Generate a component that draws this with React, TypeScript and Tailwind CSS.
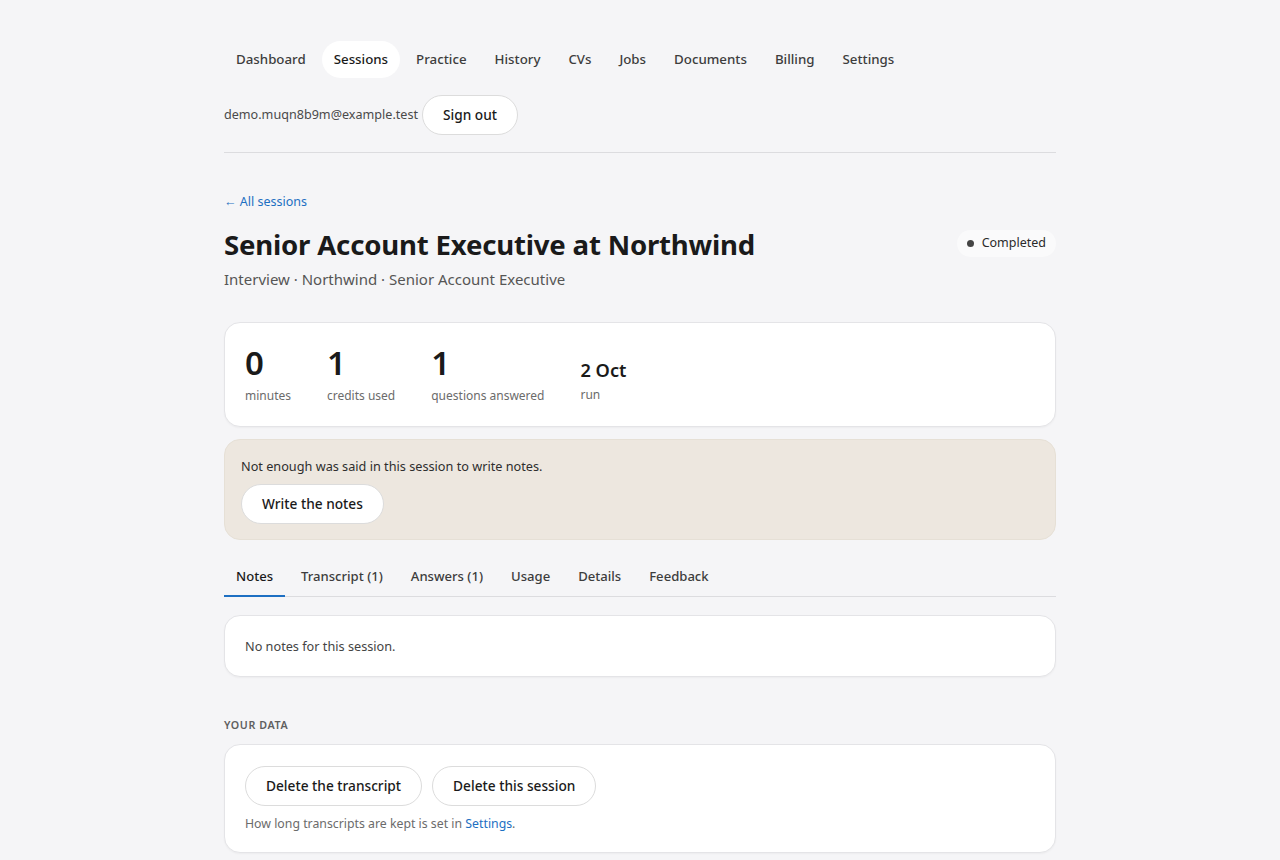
// Session detail page — nav, header, stats, notes banner, tabs, data controls

const NAV = ["Dashboard", "Sessions", "Practice", "History", "CVs", "Jobs", "Documents", "Billing", "Settings"];
const TABS = ["Notes", "Transcript (1)", "Answers (1)", "Usage", "Details", "Feedback"];

const STATS = [
  { value: "0", label: "minutes" },
  { value: "1", label: "credits used" },
  { value: "1", label: "questions answered" },
];

function PillButton({ children }: { children: React.ReactNode }) {
  return (
    <button className="h-10 px-5 rounded-full bg-white border border-[#dcdcdc] text-[13.7px] font-medium text-[#1a1a1a]">
      {children}
    </button>
  );
}

function Card({ children, className = "" }: { children: React.ReactNode; className?: string }) {
  return (
    <div className={`bg-white rounded-2xl border border-[#e4e4e7] shadow-[0_1px_2px_rgba(0,0,0,0.04)] ${className}`}>
      {children}
    </div>
  );
}

export default function App() {
  return (
    <div
      className="min-h-screen bg-[#f5f5f7] text-[#1a1a1a]"
      style={{ fontFamily: '"Segoe UI", "Noto Sans", sans-serif' }}
    >
      <div className="max-w-[832px] mx-auto pt-[41px]">
        {/* top nav */}
        <nav className="flex items-center gap-1">
          {NAV.map((item) => (
            <a
              key={item}
              className={`h-[37px] px-3 flex items-center rounded-full text-[13.3px] font-medium ${
                item === "Sessions" ? "bg-white text-[#1a1a1a]" : "text-[#3d3d3d]"
              }`}
            >
              {item}
            </a>
          ))}
        </nav>

        <div className="flex items-center gap-1 mt-[17px]">
          <span className="text-[12.6px] text-[#4a4a4a]">demo.muqn8b9m@example.test</span>
          <PillButton>Sign out</PillButton>
        </div>

        <div className="h-px bg-[#dcdcdf] mt-[17px]" />

        {/* header */}
        <a className="block mt-10 text-[12.5px] text-[#1d6fc2]">← All sessions</a>

        <div className="flex items-start justify-between mt-3">
          <h1 className="text-[27.6px] font-bold leading-[38px] tracking-[-0.2px] pt-px">
            Senior Account Executive at Northwind
          </h1>
          <span className="mt-1.5 flex items-center gap-2 px-2.5 py-1 rounded-full bg-[#fafafb] text-[12.5px] text-[#2a2a2a]">
            <span className="w-[7px] h-[7px] rounded-full bg-[#444]" />
            Completed
          </span>
        </div>
        <p className="mt-[5px] text-[15px] text-[#555]">Interview · Northwind · Senior Account Executive</p>

        {/* stats */}
        <Card className="mt-[32px] px-5 py-5 flex items-start gap-9 h-[105px]">
          {STATS.map((s) => (
            <div key={s.label} className="flex flex-col">
              <span className="text-[33px] font-semibold leading-[40px] text-[#1a1a1a]">{s.value}</span>
              <span className="text-[12px] text-[#6b6b6b] mt-1">{s.label}</span>
            </div>
          ))}
          <div className="flex flex-col pt-[15px]">
            <span className="text-[18.2px] font-semibold leading-6">2 Oct</span>
            <span className="text-[12px] text-[#6b6b6b] mt-1">run</span>
          </div>
        </Card>

        {/* notes banner */}
        <div className="mt-3 rounded-2xl bg-[#ede7df] border border-[#e6e0d6] px-4 pt-[17px] pb-[15px]">
          <p className="text-[12.7px] text-[#2e2e2e]">Not enough was said in this session to write notes.</p>
          <div className="mt-2">
            <PillButton>Write the notes</PillButton>
          </div>
        </div>

        {/* tabs */}
        <div className="mt-5 flex gap-1 border-b border-[#dcdcdf]">
          {TABS.map((t) => (
            <button
              key={t}
              className={`px-3 h-[37px] pt-[6px] flex items-start leading-5 text-[13.1px] font-medium -mb-px border-b-2 ${
                t === "Notes" ? "border-[#1d6fc2] text-[#1a1a1a]" : "border-transparent text-[#3d3d3d]"
              }`}
            >
              {t}
            </button>
          ))}
        </div>

        <Card className="mt-[18px] h-[62px] px-5 flex items-center">
          <p className="text-[12.7px] text-[#444]">No notes for this session.</p>
        </Card>

        {/* data */}
        <h2 className="mt-10 text-[10.7px] font-semibold tracking-[0.6px] uppercase text-[#5f5f5f]">Your data</h2>
        <Card className="mt-[11px] px-5 pt-[21px] pb-[19px]">
          <div className="flex gap-2.5">
            <PillButton>Delete the transcript</PillButton>
            <PillButton>Delete this session</PillButton>
          </div>
          <p className="mt-[9px] leading-[18px] text-[12.3px] text-[#6b6b6b]">
            How long transcripts are kept is set in <a className="text-[#1d6fc2]">Settings</a>.
          </p>
        </Card>
      </div>
    </div>
  );
}
